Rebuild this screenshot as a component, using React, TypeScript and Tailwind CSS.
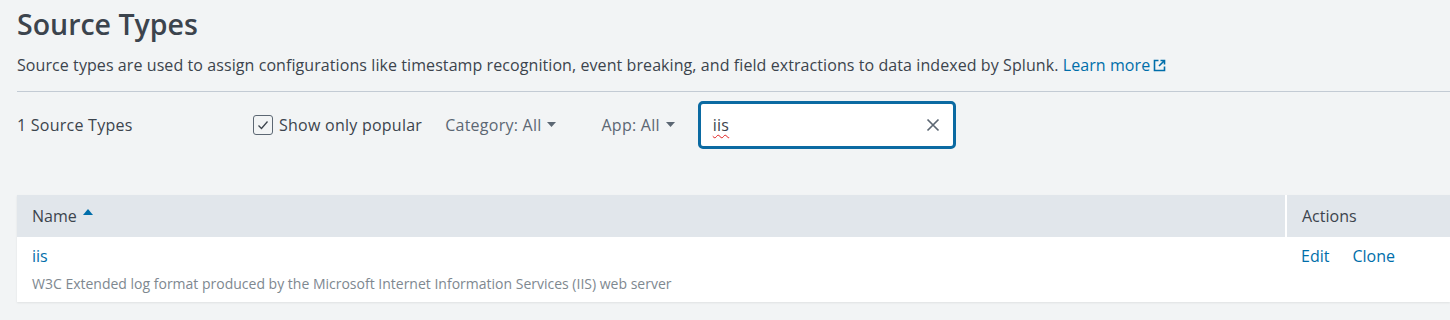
import React from "react";

export default function App() {
  return (
    <div
      className="min-h-[320px] w-[1450px] bg-[#f2f4f5] text-[#3c444d] overflow-hidden"
      style={{ fontFamily: "'Open Sans', Lato, sans-serif" }}
    >
      <div className="pl-[17px]">
        <h1 className="pt-[6px] text-[28.5px] leading-[36px] font-semibold text-[#3c444d]">Source Types</h1>
        <p className="mt-[13px] text-[16px] leading-[20px] text-[#3c444d] tracking-[0.08px]">
          Source types are used to assign configurations like timestamp recognition, event breaking, and field
          extractions to data indexed by Splunk.{" "}
          <a className="text-[#006eaa] inline-flex items-center gap-[3px]">
            Learn more
            <svg width="13" height="13" viewBox="0 0 13 13" fill="none" stroke="#006eaa" strokeWidth="1.6">
              <path d="M5.5 1.5H1.5v10h10v-4" />
              <path d="M7.5 1.5h4v4M11.5 1.5L6 7" />
            </svg>
          </a>
        </p>
        <div className="mt-[16px] h-px bg-[#c3cbd4]" />
        <div className="flex items-center h-[66px] text-[16px] tracking-[0.25px]">
          <div className="w-[236px]">1 Source Types</div>
          <label className="flex items-center gap-[6px]">
            <span className="w-[20px] h-[20px] border border-[#5c6773] rounded-[3px] bg-[#f2f4f5] flex items-center justify-center">
              <svg width="14" height="14" viewBox="0 0 14 14" fill="none" stroke="#3c444d" strokeWidth="1.3">
                <path d="M2.5 7.5l3 3 6-7" />
              </svg>
            </span>
            <span>Show only popular</span>
          </label>
          <div className="ml-[23px] flex items-center gap-[6px] text-[#5c6773]">
            Category: All
            <svg width="9" height="6" viewBox="0 0 9 6"><path d="M0 0h9L4.5 5z" fill="#5c6773" /></svg>
          </div>
          <div className="ml-[45px] flex items-center gap-[6px] text-[#5c6773]">
            App: All
            <svg width="9" height="6" viewBox="0 0 9 6"><path d="M0 0h9L4.5 5z" fill="#5c6773" /></svg>
          </div>
          <div className="ml-[23px] w-[258px] h-[48px] rounded-[5px] border-[3px] border-[#0b6aa2] bg-white flex items-center pl-[12px] pr-[13px]">
            <span className="flex-1 text-[#3c444d] underline decoration-wavy decoration-[#e02020] underline-offset-[3px] decoration-[1px]">
              iis
            </span>
            <svg width="14" height="14" viewBox="0 0 14 14" stroke="#5c6773" strokeWidth="1.7">
              <path d="M1.5 1.5l11 11M12.5 1.5l-11 11" />
            </svg>
          </div>
        </div>
        <div className="mt-[37px] shadow-[0_1px_2px_rgba(0,0,0,0.08)]">
          <div className="flex h-[42px] bg-[#e1e6eb] text-[16px]">
            <div className="flex-1 flex items-center pl-[15px] gap-[6px]">
              Name
              <svg width="10" height="6" viewBox="0 0 10 6" className="mb-[8px]"><path d="M0 6h10L5 0z" fill="#006eaa" /></svg>
            </div>
            <div className="w-[2px] bg-white" />
            <div className="w-[163px] flex items-center pl-[15px]">Actions</div>
          </div>
          <div className="flex h-[65px] bg-white">
            <div className="flex-1 pl-[15px] pt-[9px]">
              <div className="text-[16px] leading-[20px] text-[#006eaa]">iis</div>
              <div className="mt-[9px] text-[14px] leading-[18px] text-[#7e8890]">
                W3C Extended log format produced by the Microsoft Internet Information Services (IIS) web server
              </div>
            </div>
            <div className="w-[165px] pl-[16px] pt-[9px] text-[16px] leading-[20px] text-[#006eaa] flex gap-[23px] items-start">
              <span>Edit</span>
              <span>Clone</span>
            </div>
          </div>
        </div>
      </div>
    </div>
  );
}
